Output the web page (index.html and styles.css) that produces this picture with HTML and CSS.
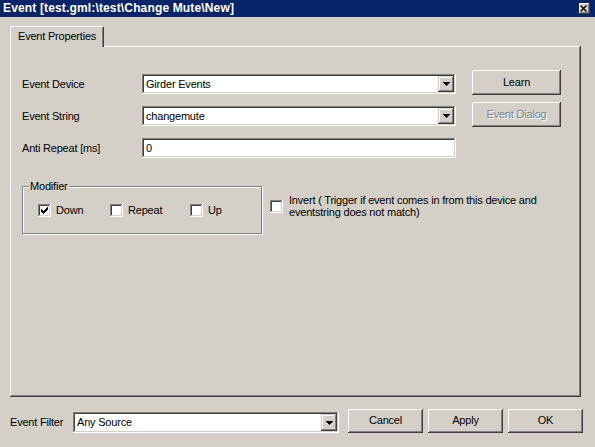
FILE: index.html
```html
<!DOCTYPE html>
<html>
<head>
<meta charset="utf-8">
<link rel="stylesheet" href="styles.css">
</head>
<body>
<div class="titlebar">
  <span class="title">Event [test.gml:\test\Change Mute\New]</span>
  <span class="close"><svg width="8" height="7" viewBox="0 0 8 7"><path d="M0.5 0.5 L6.5 6.5 M6.5 0.5 L0.5 6.5" stroke="#000" stroke-width="1.4" fill="none"/></svg></span>
</div>
<div class="client">
  <div class="tabstrip"><div class="tab">Event Properties</div></div>
  <div class="panel">
    <div class="toprow">
      <div class="form">
        <div class="frow"><span class="lbl">Event Device</span><div class="combo"><span class="ctext">Girder Events</span><span class="arrow"><svg width="7" height="4" viewBox="0 0 7 4" shape-rendering="crispEdges"><path d="M0 0h7v1h-7z M1 1h5v1h-5z M2 2h3v1h-3z M3 3h1v1h-1z" fill="#000"/></svg></span></div></div>
        <div class="frow"><span class="lbl">Event String</span><div class="combo"><span class="ctext">changemute</span><span class="arrow"><svg width="7" height="4" viewBox="0 0 7 4" shape-rendering="crispEdges"><path d="M0 0h7v1h-7z M1 1h5v1h-5z M2 2h3v1h-3z M3 3h1v1h-1z" fill="#000"/></svg></span></div></div>
        <div class="frow"><span class="lbl">Anti Repeat [ms]</span><div class="edit"><span class="ctext">0</span></div></div>
      </div>
      <div class="side">
        <div class="btn side-btn">Learn</div>
        <div class="btn side-btn disabled">Event Dialog</div>
      </div>
    </div>
    <div class="options">
      <div class="group">
        <span class="legend">Modifier</span>
        <div class="checks">
          <div class="chk w-down"><span class="box"><svg width="7" height="7" viewBox="0 0 7 7" shape-rendering="crispEdges"><path d="M6 0h1v1h-1z M5 1h2v1h-2z M0 2h1v1h-1z M4 2h3v1h-3z M0 3h2v1h-2z M3 3h3v1h-3z M0 4h5v1h-5z M1 5h3v1h-3z M2 6h1v1h-1z" fill="#000"/></svg></span><span>Down</span></div>
          <div class="chk w-repeat"><span class="box"></span><span>Repeat</span></div>
          <div class="chk"><span class="box"></span><span>Up</span></div>
        </div>
      </div>
      <div class="invert"><span class="box"></span><span class="invtext">Invert ( Trigger if event comes in from this device and<br>eventstring does not match)</span></div>
    </div>
  </div>
  <div class="bottom">
    <span class="flbl">Event Filter</span>
    <div class="combo filter"><span class="ctext">Any Source</span><span class="arrow"><svg width="7" height="4" viewBox="0 0 7 4" shape-rendering="crispEdges"><path d="M0 0h7v1h-7z M1 1h5v1h-5z M2 2h3v1h-3z M3 3h1v1h-1z" fill="#000"/></svg></span></div>
    <div class="btns">
      <div class="btn dlg-btn">Cancel</div>
      <div class="btn dlg-btn">Apply</div>
      <div class="btn dlg-btn">OK</div>
    </div>
  </div>
</div>
</body>
</html>
```
FILE: styles.css
```css
* { box-sizing: border-box; }
html, body { margin: 0; padding: 0; }
body {
  width: 595px;
  height: 447px;
  overflow: hidden;
  background: #d4d0c8;
  color: #000;
  font-family: "Liberation Sans", Arial, sans-serif;
  font-size: 11px;
  line-height: 13px;
  letter-spacing: -0.2px;
}
.titlebar {
  height: 17px;
  background: #0a246a;
  color: #fff;
  display: flex;
  align-items: center;
  justify-content: space-between;
  padding: 0 5px 0 3px;
}
.title {
  font-weight: bold;
  font-size: 12px;
  letter-spacing: 0.15px;
  white-space: nowrap;
}
.close {
  width: 11px;
  height: 11px;
  background: #d4d0c8;
  display: flex;
  align-items: center;
  justify-content: center;
  padding: 0 1px 1px 0;
  box-shadow: inset -1px -1px #404040, inset 1px 1px #fff, inset -2px -2px #808080;
}
.close svg { display: block; }
.client { padding-left: 10px; }
.tabstrip {
  margin-top: 9px;
  display: flex;
}
.tab {
  position: relative;
  z-index: 1;
  width: 94px;
  height: 21px;
  margin-bottom: -1px;
  background: #d4d0c8;
  border-top: 1px solid #fff;
  border-left: 1px solid #fff;
  border-right: 1px solid #404040;
  border-radius: 2px 2px 0 0;
  box-shadow: inset -1px 0 #808080;
  padding: 3px 0 0 7px;
  white-space: nowrap;
}
.panel {
  width: 571px;
  height: 351px;
  box-shadow: inset -1px -1px #404040, inset 1px 1px #fff, inset -2px -2px #808080;
  padding: 24px 0 0 12px;
}
.toprow { display: flex; align-items: flex-start; }
.form {
  margin-top: 4px;
  display: flex;
  flex-direction: column;
  gap: 12px;
}
.frow { display: flex; align-items: center; height: 20px; }
.lbl { width: 120px; white-space: nowrap; }
.combo, .edit {
  width: 314px;
  height: 20px;
  background: #fff;
  display: flex;
  align-items: stretch;
  padding: 2px;
  box-shadow: inset -1px -1px #fff, inset 1px 1px #808080, inset -2px -2px #d4d0c8, inset 2px 2px #404040;
}
.ctext {
  flex: 1;
  padding-left: 2px;
  display: flex;
  align-items: center;
  white-space: nowrap;
}
.arrow {
  width: 16px;
  background: #d4d0c8;
  display: flex;
  align-items: center;
  justify-content: center;
  padding: 0 0 0 1px;
  box-shadow: inset -1px -1px #404040, inset 1px 1px #d4d0c8, inset -2px -2px #808080, inset 2px 2px #fff;
}
.arrow svg { display: block; }
.side {
  margin-left: 16px;
  display: flex;
  flex-direction: column;
  gap: 7px;
}
.btn {
  background: #d4d0c8;
  display: flex;
  align-items: center;
  justify-content: center;
  white-space: nowrap;
  box-shadow: inset -1px -1px #404040, inset 1px 1px #fff, inset -2px -2px #808080;
  padding-bottom: 1px;
}
.side-btn { width: 89px; height: 25px; }
.disabled { color: #808080; text-shadow: 1px 1px 0 #fff; }
.options {
  margin-top: 28px;
  display: flex;
  align-items: flex-start;
}
.group {
  width: 240px;
  height: 48px;
  border: 1px solid #808080;
  box-shadow: inset 1px 1px #fff, 1px 1px 0 #fff;
  display: flex;
  flex-direction: column;
  align-items: flex-start;
}
.legend {
  margin: -7px 0 0 6px;
  padding: 0 1px;
  background: #d4d0c8;
  height: 13px;
}
.checks {
  margin-top: 11px;
  padding-left: 15px;
  display: flex;
  align-items: center;
}
.chk { display: flex; align-items: center; gap: 5px; height: 13px; }
.w-down { width: 72px; }
.w-repeat { width: 80px; }
.box {
  width: 13px;
  height: 13px;
  flex: none;
  background: #fff;
  display: flex;
  padding: 3px;
  box-shadow: inset -1px -1px #fff, inset 1px 1px #808080, inset -2px -2px #d4d0c8, inset 2px 2px #404040;
}
.box svg { display: block; }
.invert {
  margin: 8px 0 0 8px;
  display: flex;
  align-items: center;
  gap: 6px;
}
.invtext { line-height: 12px; white-space: nowrap; }
.bottom {
  margin-top: 12px;
  display: flex;
  align-items: flex-end;
}
.flbl { width: 63px; height: 21px; line-height: 21px; white-space: nowrap; }
.filter { width: 266px; height: 21px; }
.btns { margin-left: 9px; display: flex; gap: 5px; }
.dlg-btn { width: 75px; height: 24px; }
```
